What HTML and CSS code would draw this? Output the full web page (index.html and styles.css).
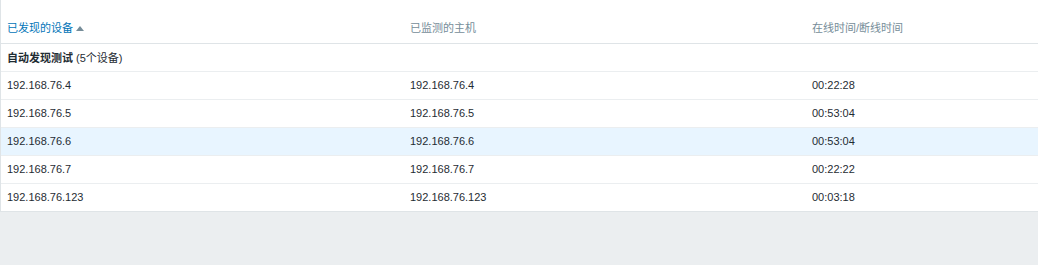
FILE: index.html
```html
<!DOCTYPE html>
<html>
<head>
<meta charset="utf-8">
<link rel="stylesheet" href="styles.css">
</head>
<body>
<div class="panel">
  <table class="list">
    <thead>
      <tr>
        <th class="c1"><a class="sorted">已发现的设备<span class="arrow"></span></a></th>
        <th class="c2">已监测的主机</th>
        <th class="c3">在线时间/断线时间</th>
      </tr>
    </thead>
    <tbody>
      <tr class="group"><td colspan="3"><b>自动发现测试</b> (5个设备)</td></tr>
      <tr><td>192.168.76.4</td><td>192.168.76.4</td><td>00:22:28</td></tr>
      <tr><td>192.168.76.5</td><td>192.168.76.5</td><td>00:53:04</td></tr>
      <tr class="hover"><td>192.168.76.6</td><td>192.168.76.6</td><td>00:53:04</td></tr>
      <tr><td>192.168.76.7</td><td>192.168.76.7</td><td>00:22:22</td></tr>
      <tr><td>192.168.76.123</td><td>192.168.76.123</td><td>00:03:18</td></tr>
    </tbody>
  </table>
</div>
</body>
</html>
```

FILE: styles.css
```css
html, body {
  margin: 0;
  padding: 0;
  background: #ebeef0;
  font-family: Arial, "Liberation Sans", "Noto Sans CJK SC", sans-serif;
  font-size: 11px;
  color: #1f2c33;
}
.panel {
  background: #fff;
  border-left: 1px solid #dfe4e7;
  border-bottom: 1px solid #dfe4e7;
}
.list {
  width: 100%;
  border-collapse: collapse;
  table-layout: fixed;
}
.list th {
  height: 43px;
  box-sizing: border-box;
  text-align: left;
  vertical-align: bottom;
  font-weight: normal;
  color: #768d99;
  padding: 0 6px 8px 6px;
  border-bottom: 1px solid #dfe4e7;
  white-space: nowrap;
}
.list th.c1 { width: 403px; }
.list th.c2 { width: 402px; }
.sorted {
  color: #0275b8;
}
.arrow {
  display: inline-block;
  width: 0;
  height: 0;
  margin-left: 3px;
  border-left: 4px solid transparent;
  border-right: 4px solid transparent;
  border-bottom: 5px solid #768d99;
  vertical-align: 1px;
}
.list td {
  height: 28px;
  box-sizing: border-box;
  padding: 0 6px;
  border-bottom: 1px solid #ebeef0;
  vertical-align: middle;
  white-space: nowrap;
}
.list tr:last-child td { border-bottom: none; }
.list tr.hover td { background: #e8f5ff; }
.group b { font-weight: bold; }
```
